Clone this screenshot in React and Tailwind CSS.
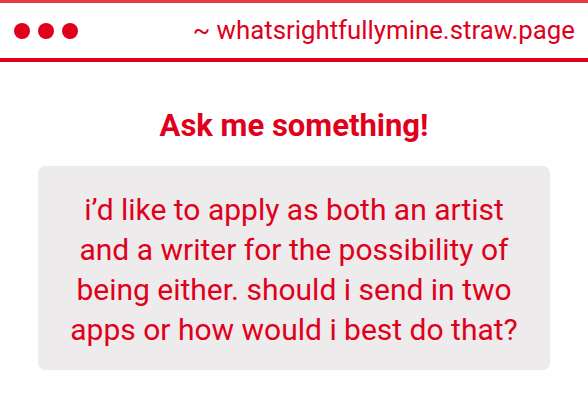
import React from 'react';

function App() {
  return (
    <div className="w-[588px] h-[400px] bg-white font-['Roboto',sans-serif] text-[#e0001b] overflow-hidden">
      <header className="h-[62px] border-t-[3px] border-t-[#ea3a45] border-b-4 border-b-[#e0001b] flex items-center justify-between pl-[14px] pr-[13px]">
        <div className="flex gap-[8px]">
          <span className="w-[16px] h-[16px] rounded-full bg-[#e0001b]"></span>
          <span className="w-[16px] h-[16px] rounded-full bg-[#e0001b]"></span>
          <span className="w-[16px] h-[16px] rounded-full bg-[#e0001b]"></span>
        </div>
        <div className="text-[25.8px] leading-none">~ whatsrightfullymine.straw.page</div>
      </header>

      <h1 className="mt-[46px] text-center text-[31px] font-bold leading-[36px]">Ask me something!</h1>

      <div className="mx-[38px] mt-[22px] h-[204px] rounded-[7px] bg-[#edebec] px-[30px] pt-[24px] text-center text-[30px] leading-[40px]">
        i’d like to apply as both an artist and a writer for the possibility of being either. should i send in two apps or how would i best do that?
      </div>
    </div>
  );
}

export default App;
